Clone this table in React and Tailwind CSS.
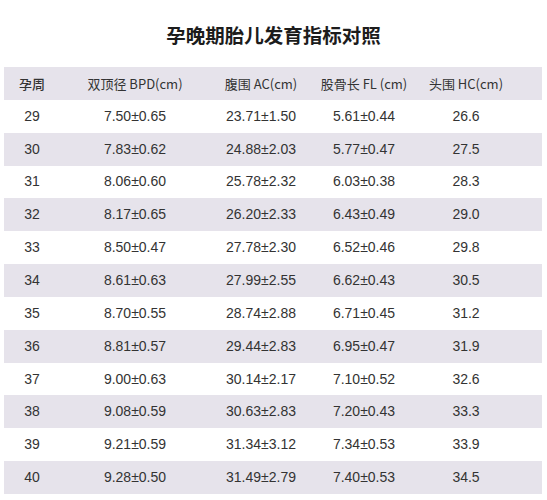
import React from "react";

const rows = [
  ["29", "7.50±0.65", "23.71±1.50", "5.61±0.44", "26.6"],
  ["30", "7.83±0.62", "24.88±2.03", "5.77±0.47", "27.5"],
  ["31", "8.06±0.60", "25.78±2.32", "6.03±0.38", "28.3"],
  ["32", "8.17±0.65", "26.20±2.33", "6.43±0.49", "29.0"],
  ["33", "8.50±0.47", "27.78±2.30", "6.52±0.46", "29.8"],
  ["34", "8.61±0.63", "27.99±2.55", "6.62±0.43", "30.5"],
  ["35", "8.70±0.55", "28.74±2.88", "6.71±0.45", "31.2"],
  ["36", "8.81±0.57", "29.44±2.83", "6.95±0.47", "31.9"],
  ["37", "9.00±0.63", "30.14±2.17", "7.10±0.52", "32.6"],
  ["38", "9.08±0.59", "30.63±2.83", "7.20±0.43", "33.3"],
  ["39", "9.21±0.59", "31.34±3.12", "7.34±0.53", "33.9"],
  ["40", "9.28±0.50", "31.49±2.79", "7.40±0.53", "34.5"],
];

const headers = ["孕周", "双顶径 BPD(cm)", "腹围 AC(cm)", "股骨长 FL (cm)", "头围 HC(cm)"];

const gridCls = "grid grid-cols-[56px_150px_102px_104px_100px_26px] h-[32.85px] items-center";

export default function App() {
  return (
    <div
      className="w-[547px] h-[500px] bg-white text-[#2b2b2b] overflow-hidden"
      style={{ fontFamily: '"Liberation Sans", "Noto Sans CJK SC", sans-serif' }}
    >
      <div className="h-[67px] flex items-center justify-center pt-[3px]">
        <h1
          className="text-[19.5px] font-bold text-[#1c1c1c]"
          style={{ fontFamily: '"Noto Sans CJK SC", sans-serif' }}
        >
          孕晚期胎儿发育指标对照
        </h1>
      </div>
      <div className="mx-[4px] w-[538px]">
        <div className={`${gridCls} bg-[#e6e3eb] text-[13px] text-[#333]`}>
          {headers.map((h, i) => (
            <div
              key={i}
              className={`text-center whitespace-nowrap ${i === 0 ? "font-medium" : ""}`}
              style={{ fontFamily: '"Noto Sans CJK SC", sans-serif' }}
            >
              {h}
            </div>
          ))}
          <div />
        </div>
        {rows.map((r, ri) => (
          <div
            key={ri}
            className={`${gridCls} text-[14px] text-[#333] ${ri % 2 === 1 ? "bg-[#e6e3eb]" : "bg-white"}`}
          >
            {r.map((c, ci) => (
              <div key={ci} className="text-center whitespace-nowrap">
                {c}
              </div>
            ))}
            <div />
          </div>
        ))}
      </div>
    </div>
  );
}
